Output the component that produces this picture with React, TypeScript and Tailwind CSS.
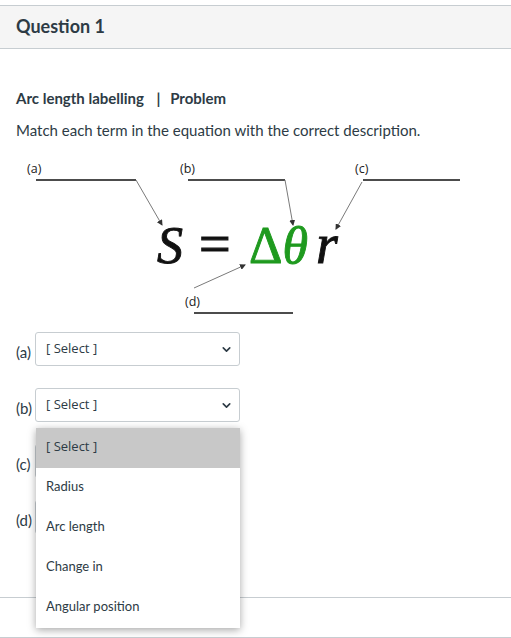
import { ChevronDown } from 'lucide-react';

const rows = ['(a)', '(b)', '(c)', '(d)'];
const options = ['[ Select ]', 'Radius', 'Arc length', 'Change in', 'Angular position'];

function Arrow({ x1, y1, x2, y2 }: { x1: number; y1: number; x2: number; y2: number }) {
  return <line x1={x1} y1={y1} x2={x2} y2={y2} stroke="#7a7a7a" strokeWidth={1} markerEnd="url(#head)" />;
}

function Diagram() {
  const label = { fontFamily: '"Open Sans", sans-serif', fontSize: 12.5, fontWeight: 500, fill: '#222' };
  const eq = { fontFamily: '"Liberation Serif", serif', fontSize: 52 };
  return (
    <svg width={511} height={165} viewBox="0 0 511 165" className="-mx-4 block">
      <defs>
        <marker id="head" markerWidth="6" markerHeight="6" refX="5" refY="3" orient="auto">
          <path d="M0,0 L6,3 L0,6 z" fill="#333" />
        </marker>
      </defs>
      <text x={27} y={18} style={label}>(a)</text>
      <line x1={36} y1={25} x2={136} y2={25} stroke="#111" strokeWidth={1.6} />
      <Arrow x1={136} y1={25} x2={162} y2={70} />
      <text x={180} y={18} style={label}>(b)</text>
      <line x1={188} y1={25} x2={285} y2={25} stroke="#111" strokeWidth={1.6} />
      <Arrow x1={285} y1={25} x2={293} y2={70} />
      <text x={355} y={18} style={label}>(c)</text>
      <line x1={363} y1={25} x2={460} y2={25} stroke="#111" strokeWidth={1.6} />
      <Arrow x1={362} y1={27} x2={336} y2={74} />
      <text x={157} y={108} style={{ ...eq, fontStyle: 'italic' }} fill="#111" stroke="#111" strokeWidth={0.9}>S</text>
      <text x={199} y={108} style={{ ...eq, fontSize: 56 }} fill="#111" stroke="#111" strokeWidth={1.2}>=</text>
      <text x={249} y={108} style={eq} fill="#1f9a1f" stroke="#1f9a1f" strokeWidth={0.9}>
        Δ<tspan fontStyle="italic">θ</tspan>
      </text>
      <text x={316} y={108} style={{ ...eq, fontStyle: 'italic', fontSize: 56 }} fill="#111" stroke="#111" strokeWidth={0.9}>r</text>
      <Arrow x1={194} y1={133} x2={245} y2={110} />
      <text x={185} y={151} style={label}>(d)</text>
      <line x1={194} y1={158} x2={293} y2={158} stroke="#111" strokeWidth={1.6} />
    </svg>
  );
}

function SelectBox() {
  return (
    <div className="flex h-[34px] w-[205px] items-center justify-between rounded-[3px] border border-[#c7cdd1] bg-white pl-[10px] pr-[6px]">
      <span className="font-['Open_Sans',sans-serif] text-[13px] text-[#2d3b45]">[ Select ]</span>
      <ChevronDown className="h-[13px] w-[13px] text-[#2d3b45]" strokeWidth={3} />
    </div>
  );
}

export default function App() {
  return (
    <div className="relative h-[638px] w-[511px] overflow-hidden bg-white pt-[5px] font-['Lato',sans-serif] text-[#2d3b45]">
      <div className="flex h-[44px] items-center border-y border-[#c7cdd1] bg-[#f5f5f5] px-4 pb-[2px]">
        <h2 className="text-[18px] font-bold text-[#2d3b45]">Question 1</h2>
      </div>

      <div className="px-4 pt-[39px]">
        <div className="text-[15px] font-bold leading-5">
          Arc length labelling <span className="ml-[9px] mr-[6px]">|</span> Problem
        </div>
        <p className="mt-[11px] text-[15px] leading-[22px]">Match each term in the equation with the correct description.</p>
        <div className="mt-[14px]">
          <Diagram />
        </div>

        <div className="mt-[12px] flex flex-col gap-[22px]">
          {rows.map((row, i) => (
            <div key={row} className="relative flex items-center gap-[3px]">
              <span className="mt-[7px] w-[16px] text-[15px]">{row}</span>
              <SelectBox />
              {i === 1 ? (
                <div className="absolute left-[20px] top-[calc(100%+6px)] z-10 w-[204px] bg-white shadow-[0_2px_8px_rgba(0,0,0,0.35)]">
                  {options.map((opt, j) => (
                    <div
                      key={opt}
                      className={`flex h-[40px] items-center px-[10px] pb-[2px] text-[13px] text-[#2d3b45] ${
                        j === 0 ? "bg-[#c8c8c8] font-['Open_Sans',sans-serif]" : ''
                      }`}
                    >
                      {opt}
                    </div>
                  ))}
                </div>
              ) : null}
            </div>
          ))}
        </div>
      </div>

      <div className="mt-[63px] h-[41px] border-y border-[#c7cdd1]" />
    </div>
  );
}
